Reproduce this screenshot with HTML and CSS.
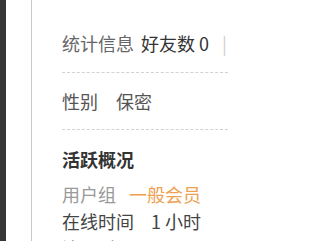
FILE: index.html
```html
<!DOCTYPE html>
<html lang="zh">
<head>
<meta charset="utf-8">
<link rel="stylesheet" href="styles.css">
</head>
<body>
<div class="page">
  <div class="dark"></div>
  <div class="gutter"></div>
  <div class="main">
    <ul class="block first">
      <li><em class="lbl stat">统计信息</em><a class="val dark-text">好友数 0</a><span class="pipe">|</span></li>
    </ul>
    <ul class="block">
      <li><em class="lbl gender">性别</em><span class="val grey">保密</span></li>
    </ul>
    <h2 class="title">活跃概况</h2>
    <ul class="list">
      <li><em class="lbl light group">用户组</em><span class="val orange">一般会员</span></li>
      <li><em class="lbl time">在线时间</em><span class="val">1 小时</span></li>
      <li><em class="lbl time">注册时间</em><span class="val">2023-5-12</span></li>
    </ul>
  </div>
</div>
</body>
</html>
```
FILE: styles.css
```css
html, body {
  margin: 0;
  padding: 0;
  background: #fff;
  overflow: hidden;
}
body {
  font-family: "Noto Sans CJK SC", "Noto Sans", sans-serif;
  font-size: 18px;
  line-height: 27px;
  color: #444;
}
.page {
  display: flex;
  height: 241px;
  width: 228px;
  overflow: hidden;
}
.dark {
  width: 6px;
  background: #363636;
  flex: none;
}
.gutter {
  width: 25px;
  flex: none;
  border-right: 1px solid #c8c8c8;
}
.main {
  padding-left: 30px;
  flex: 1;
  min-width: 0;
  overflow: hidden;
}
ul {
  list-style: none;
  margin: 0;
  padding: 0;
}
li {
  white-space: nowrap;
}
em {
  font-style: normal;
}
a {
  text-decoration: none;
}
.block {
  border-bottom: 1px dashed #d2d2d2;
  padding: 15px 0 14px;
}
.block.first {
  padding-top: 30px;
  padding-bottom: 15px;
}
.lbl {
  color: #666;
}
.lbl.light {
  color: #999;
}
.stat { margin-right: 7px; }
.gender { margin-right: 18px; color: #555; }
.group { margin-right: 13px; }
.time { margin-right: 17px; color: #444; }
.dark-text { color: #333; }
.grey { color: #555; }
.orange { color: #f0a050; }
.pipe {
  color: #d0d0d0;
  margin-left: 13px;
}
.title {
  margin: 16px 0 8px;
  font-size: 18px;
  line-height: 27px;
  font-weight: bold;
  color: #333;
}
```
